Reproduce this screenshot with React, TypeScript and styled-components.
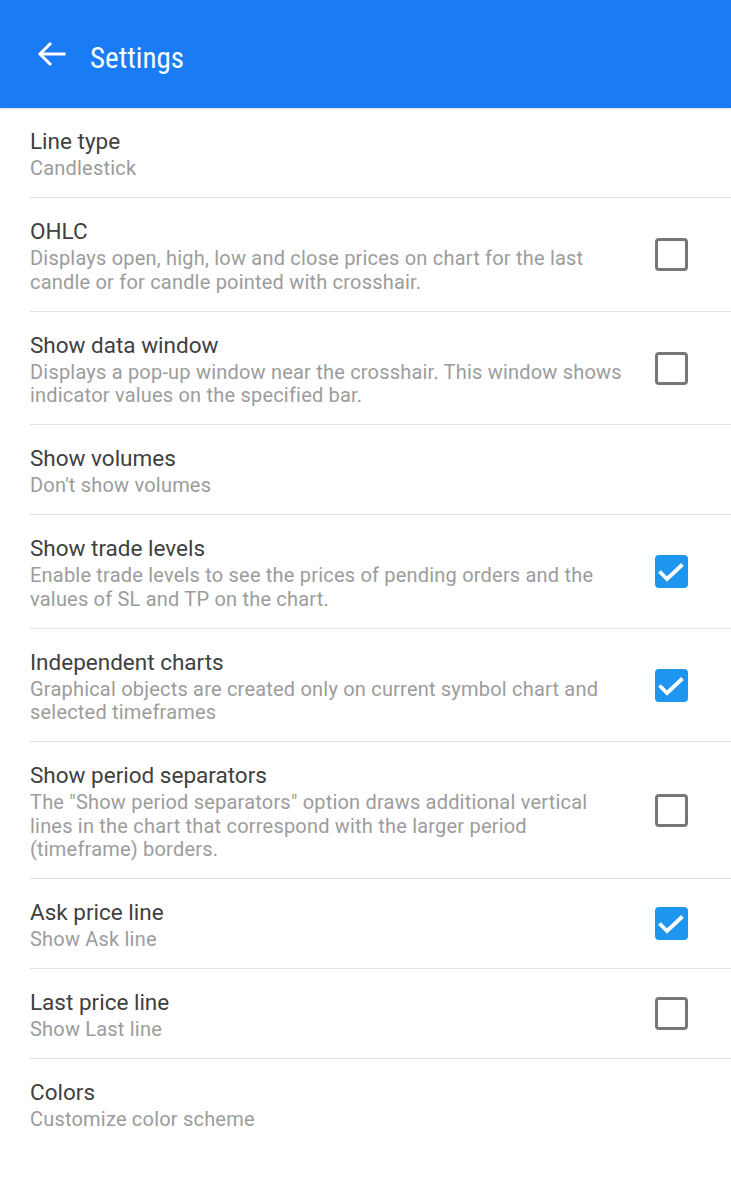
import React from "react";
import styled, { createGlobalStyle } from "styled-components";

const Global = createGlobalStyle`
  html, body { margin: 0; padding: 0; background: #ffffff; }
  body { font-family: Roboto, "Noto Sans", "Liberation Sans", sans-serif; }
  * { box-sizing: border-box; }
`;

const Page = styled.div`
  width: 731px;
  min-height: 1200px;
  background: #fff;
`;

const Header = styled.header`
  height: 108px;
  background: #1a7cf4;
  display: flex;
  align-items: center;
  padding-left: 36px;
  gap: 22px;
  box-shadow: 0 1px 2px rgba(0, 0, 0, 0.15);
`;

const Title = styled.h1`
  margin: 0;
  color: #fff;
  font-family: "Roboto Condensed", Roboto, sans-serif;
  font-stretch: 85%;
  font-weight: 400;
  font-size: 29px;
  line-height: 34px;
  margin-top: 7px;
`;

const List = styled.div`
  display: flex;
  flex-direction: column;
`;

const Row = styled.div`
  margin-left: 30px;
  padding: 17px 43px 16.5px 0;
  display: flex;
  align-items: center;
  border-bottom: 1px solid #e2e2e2;
  &:last-child { border-bottom: none; }
`;

const Texts = styled.div`
  width: 593px;
  flex: none;
`;

const RowTitle = styled.div`
  font-size: 22.5px;
  line-height: 32px;
  color: #404040;
`;

const RowDesc = styled.div`
  font-size: 20px;
  letter-spacing: 0.2px;
  line-height: 23.5px;
  color: #9c9c9c;
`;

const Spacer = styled.div`
  flex: 1;
`;

const Box = styled.div<{ $checked: boolean }>`
  width: 33px;
  height: 33px;
  border-radius: 4px;
  border: ${(p) => (p.$checked ? "none" : "3px solid #777")};
  background: ${(p) => (p.$checked ? "#1e96f0" : "transparent")};
  display: flex;
  align-items: center;
  justify-content: center;
  flex: none;
`;

const Back = () => (
  <svg width="32" height="32" viewBox="0 0 32 32" fill="none" stroke="#fff" strokeWidth="3" strokeLinecap="square">
    <path d="M28 16H5" />
    <path d="M15 5L4 16l11 11" strokeLinecap="butt" />
  </svg>
);

const Check = () => (
  <svg width="33" height="33" viewBox="0 0 33 33" fill="none" stroke="#fff" strokeWidth="3.8">
    <path d="M4.5 16.5l7.5 7.5L27.5 9.5" />
  </svg>
);

type Item = { title: string; desc: string; check?: boolean };

const items: Item[] = [
  { title: "Line type", desc: "Candlestick" },
  {
    title: "OHLC",
    desc: "Displays open, high, low and close prices on chart for the last candle or for candle pointed with crosshair.",
    check: false,
  },
  {
    title: "Show data window",
    desc: "Displays a pop-up window near the crosshair. This window shows indicator values on the specified bar.",
    check: false,
  },
  { title: "Show volumes", desc: "Don't show volumes" },
  {
    title: "Show trade levels",
    desc: "Enable trade levels to see the prices of pending orders and the values of SL and TP on the chart.",
    check: true,
  },
  {
    title: "Independent charts",
    desc: "Graphical objects are created only on current symbol chart and selected timeframes",
    check: true,
  },
  {
    title: "Show period separators",
    desc: 'The "Show period separators" option draws additional vertical lines in the chart that correspond with the larger period (timeframe) borders.',
    check: false,
  },
  { title: "Ask price line", desc: "Show Ask line", check: true },
  { title: "Last price line", desc: "Show Last line", check: false },
  { title: "Colors", desc: "Customize color scheme" },
];

export default function App() {
  return (
    <Page>
      <Global />
      <Header>
        <Back />
        <Title>Settings</Title>
      </Header>
      <List>
        {items.map((it) => (
          <Row key={it.title}>
            <Texts>
              <RowTitle>{it.title}</RowTitle>
              <RowDesc>{it.desc}</RowDesc>
            </Texts>
            <Spacer />
            {it.check !== undefined && (
              <Box $checked={it.check}>{it.check && <Check />}</Box>
            )}
          </Row>
        ))}
      </List>
    </Page>
  );
}
